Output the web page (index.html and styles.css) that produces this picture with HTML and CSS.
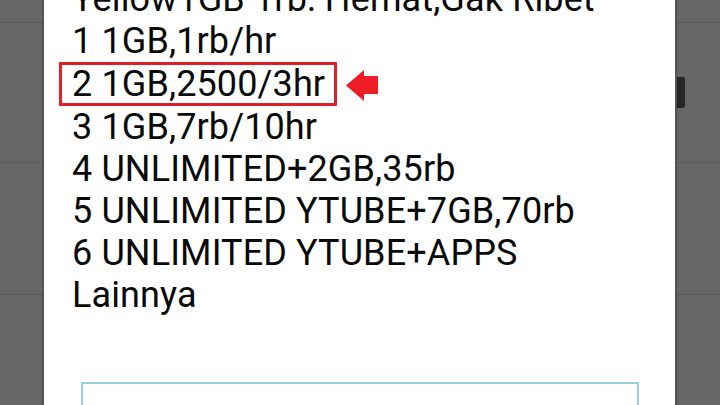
FILE: index.html
```html
<!DOCTYPE html>
<html>

<head>
    <meta charset="utf-8" />
    <title>USSD</title>
    <link rel="stylesheet" href="styles.css">
</head>

<body>
    <div class="screen">
        <!-- the list behind the dialog -->
        <div class="backdrop">
            <div class="row row-a"></div>
            <div class="row row-b"></div>
            <div class="row row-c"></div>
            <div class="row row-d"></div>
            <span class="scroll"></span>
        </div>

        <div class="dialog">
            <div class="menu">
                <p>Yellow1GB 1rb: Hemat,Gak Ribet</p>
                <p>1 1GB,1rb/hr</p>
                <p class="pick">
                    <span class="mark">2 1GB,2500/3hr</span>
                    <svg class="arrow" width="33" height="31" viewBox="0 0 33 31">
                        <path d="M0 15.5 L18 0 L18 6 L32 6 L32 24 L18 24 L18 31 Z" fill="#ee1c25" />
                    </svg>
                </p>
                <p>3 1GB,7rb/10hr</p>
                <p>4 UNLIMITED+2GB,35rb</p>
                <p>5 UNLIMITED YTUBE+7GB,70rb</p>
                <p>6 UNLIMITED YTUBE+APPS</p>
                <p>Lainnya</p>
            </div>
            <div class="reply"></div>
        </div>
    </div>
</body>

</html>
```

FILE: styles.css
```css
html,
body {
    margin: 0;
    padding: 0;
}

body {
    width: 720px;
    height: 405px;
    overflow: hidden;
    background-color: #666666;
    font-family: Roboto, "Liberation Sans", sans-serif;
}

.screen {
    display: grid;
    width: 720px;
    height: 405px;
}

.backdrop,
.dialog {
    grid-area: 1 / 1;
}

.backdrop {
    position: relative;
    display: flex;
    flex-direction: column;
}

.backdrop .row {
    border-bottom: 1px solid #595959;
    flex: none;
}

.backdrop .row-a {
    height: 22px;
}

.backdrop .row-b {
    height: 139px;
}

.backdrop .row-c {
    height: 131px;
}

.backdrop .row-d {
    border-bottom: 0;
    flex: 1;
}

.backdrop .scroll {
    position: absolute;
    left: 677px;
    top: 77px;
    width: 8px;
    height: 31px;
    border-radius: 0 2px 2px 0;
    background-color: #262626;
}

.dialog {
    justify-self: start;
    margin-left: 44px;
    width: 631px;
    height: 405px;
    background-color: #fff;
    box-shadow: -2px 0 1px rgba(0, 0, 0, 0.18), 2px 0 1px rgba(0, 0, 0, 0.18);
    overflow: hidden;
    z-index: 1;
}

.menu {
    margin-top: -22px;
    padding-left: 28px;
    color: #0a0a0a;
    font-size: 36px;
    line-height: 42px;
    letter-spacing: 0.12px;
}

.menu p {
    margin: 0;
    white-space: nowrap;
}

.menu .pick {
    display: flex;
    align-items: center;
    gap: 9px;
    margin-left: -13px;
}

.menu .mark {
    display: inline-block;
    padding: 0 9px 0 10px;
    border: 3px solid #e51d26;
    line-height: 38px;
}

.menu .arrow {
    display: block;
    margin-top: 2px;
}

.reply {
    margin: 66px 0 0 37px;
    width: 554px;
    height: 40px;
    border: 2px solid #94d0e0;
}
```
